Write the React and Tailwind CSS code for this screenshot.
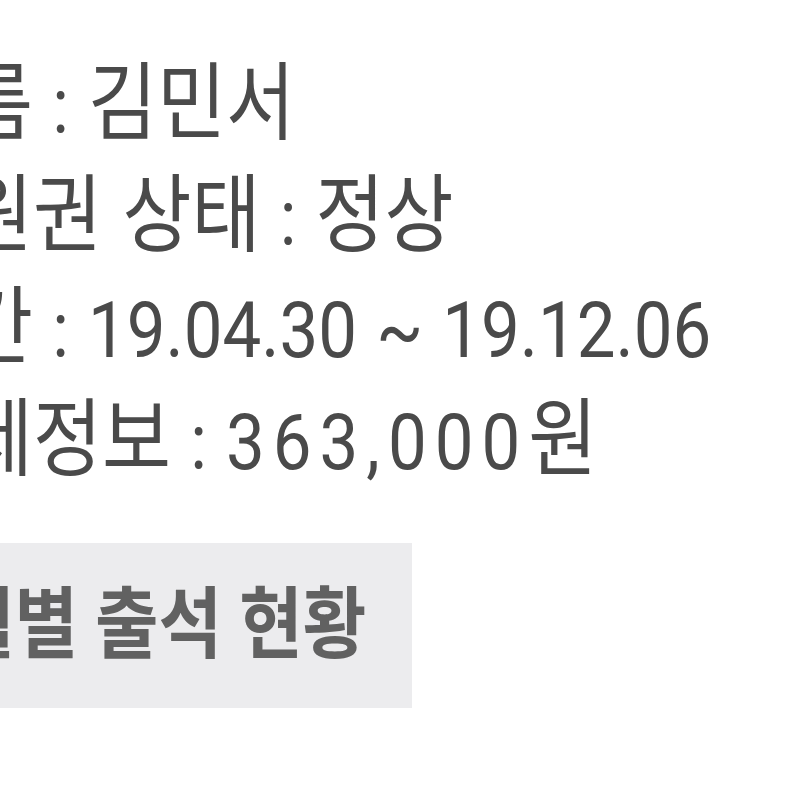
const Ko = ({ children }) => (
  <span className="text-[75px] leading-none">{children}</span>
);

export default function App() {
  const rows = [
    <>
      <Ko>이름</Ko> : <Ko>김민서</Ko>
    </>,
    <>
      <Ko>회원권 상태</Ko> : <Ko>정상</Ko>
    </>,
    <>
      <Ko>기간</Ko> : 19.04.30 ~ 19.12.06
    </>,
    <>
      <Ko>결제정보</Ko> : <span className="tracking-[8px]">363,000</span>
      <Ko>원</Ko>
    </>,
  ];

  return (
    <div
      className="w-[800px] h-[800px] overflow-hidden bg-white"
      style={{ fontFamily: "Roboto, 'Noto Sans CJK KR', sans-serif" }}
    >
      <div className="ml-[-105px] pt-[51px] flex flex-col">
        {rows.map((row, i) => (
          <p
            key={i}
            className="h-[112px] text-[69px] leading-[112px] text-[#4a4a4a] whitespace-nowrap scale-y-[1.14] origin-center [word-spacing:2px]"
          >
            {row}
          </p>
        ))}
      </div>
      <div className="mt-[44px] w-[412px] h-[165px] bg-[#ececee] flex items-center overflow-hidden">
        <span className="ml-[-49px] text-[69px] font-bold text-[#616161] whitespace-nowrap inline-block scale-y-[1.14]">
          월별 출석 현황
        </span>
      </div>
    </div>
  );
}
